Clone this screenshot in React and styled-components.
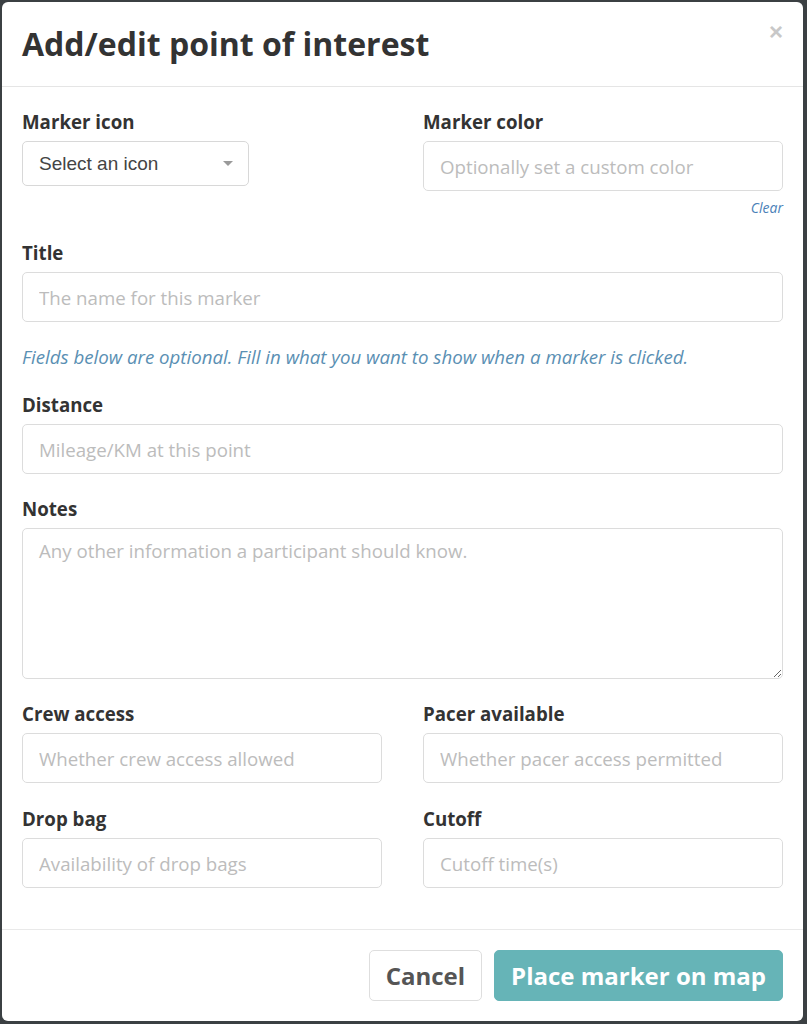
import React from "react";
import styled, { createGlobalStyle } from "styled-components";

const GlobalStyle = createGlobalStyle`
  * { box-sizing: border-box; }
  html, body {
    margin: 0;
    background: #3b4043;
    font-family: "Open Sans", "Liberation Sans", sans-serif;
  }
  #root { padding: 2px 4px 2px 2px; }
`;

const Modal = styled.div`
  width: 801px;
  background: #fff;
  border-radius: 6px;
  overflow: hidden;
`;

const Header = styled.div`
  display: flex;
  align-items: flex-start;
  justify-content: space-between;
  padding: 22px 20px 0 20px;
  height: 85px;
  border-bottom: 1px solid #e5e5e5;
`;

const Title = styled.h2`
  margin: 0;
  font-size: 32px;
  font-weight: 700;
  line-height: 40px;
  color: #333;
`;

const Close = styled.button`
  border: 0;
  background: none;
  padding: 0;
  margin-top: -2px;
  font-family: "Liberation Sans", sans-serif;
  font-size: 24px;
  font-weight: 700;
  line-height: 20px;
  color: #c8c8c8;
  cursor: pointer;
`;

const Body = styled.div`
  padding: 23px 20px 18px 20px;
`;

const Row = styled.div`
  display: grid;
  grid-template-columns: 1fr 1fr;
  column-gap: 41px;
`;

const Group = styled.div`
  margin-top: ${(p) => p.$top || "0"};
  margin-bottom: ${(p) => p.$bottom || "23px"};
`;

const Label = styled.label`
  display: block;
  font-size: 18.7px;
  font-weight: 700;
  line-height: 24px;
  color: #333;
  margin-bottom: 7px;
`;

const Input = styled.input`
  display: block;
  width: 100%;
  height: 50px;
  padding: 0 16px;
  border: 1px solid #dcdcdc;
  border-radius: 5px;
  font-family: "Open Sans", sans-serif;
  font-size: 18.7px;
  color: #333;
  outline: none;

  &::placeholder { color: #bcbcbc; }
`;

const TextArea = styled.textarea`
  display: block;
  width: 100%;
  height: 151px;
  padding: 10px 16px;
  border: 1px solid #dcdcdc;
  border-radius: 5px;
  font-family: "Open Sans", sans-serif;
  font-size: 18.7px;
  line-height: 24px;
  color: #333;
  outline: none;
  resize: vertical;

  &::placeholder { color: #bcbcbc; }
`;

const Select = styled.div`
  display: flex;
  align-items: center;
  justify-content: space-between;
  width: 227px;
  height: 45px;
  padding: 0 15px 0 16px;
  border: 1px solid #d8d8d8;
  border-radius: 5px;
  font-family: "Liberation Sans", Arial, sans-serif;
  font-size: 19px;
  color: #444;
`;

const Caret = styled.span`
  width: 0;
  height: 0;
  border-left: 5px solid transparent;
  border-right: 5px solid transparent;
  border-top: 5px solid #9a9a9a;
`;

const ClearRow = styled.div`
  display: flex;
  justify-content: flex-end;
  margin-top: 7px;
`;

const ClearLink = styled.a`
  font-size: 14px;
  font-style: italic;
  line-height: 19px;
  color: #4a7fb8;
  cursor: pointer;
`;

const Help = styled.p`
  margin: 0 0 24px 0;
  font-size: 18.7px;
  font-style: italic;
  line-height: 24px;
  color: #5a8fb3;
`;

const Footer = styled.div`
  display: flex;
  justify-content: flex-end;
  gap: 12px;
  padding: 20px;
  border-top: 1px solid #e9e9e9;
`;

const Button = styled.button`
  height: 51px;
  padding: 0 16px;
  border-radius: 5px;
  font-family: "Open Sans", sans-serif;
  font-size: 24px;
  font-weight: 700;
  cursor: pointer;
  border: 1px solid ${(p) => (p.$primary ? "#66b4b7" : "#dedede")};
  background: ${(p) => (p.$primary ? "#66b4b7" : "#fff")};
  color: ${(p) => (p.$primary ? "#fff" : "#555")};
`;

export default function App() {
  return (
    <>
      <GlobalStyle />
      <Modal>
        <Header>
          <Title>Add/edit point of interest</Title>
          <Close aria-label="Close">×</Close>
        </Header>
        <Body>
          <Row>
            <Group $bottom="0">
              <Label>Marker icon</Label>
              <Select>
                <span>Select an icon</span>
                <Caret />
              </Select>
            </Group>
            <Group $bottom="0">
              <Label>Marker color</Label>
              <Input placeholder="Optionally set a custom color" />
              <ClearRow>
                <ClearLink>Clear</ClearLink>
              </ClearRow>
            </Group>
          </Row>
          <Group $top="24px">
            <Label>Title</Label>
            <Input placeholder="The name for this marker" />
          </Group>
          <Help>Fields below are optional. Fill in what you want to show when a marker is clicked.</Help>
          <Group>
            <Label>Distance</Label>
            <Input placeholder="Mileage/KM at this point" />
          </Group>
          <Group>
            <Label>Notes</Label>
            <TextArea placeholder="Any other information a participant should know." />
          </Group>
          <Row>
            <Group $bottom="24px">
              <Label>Crew access</Label>
              <Input placeholder="Whether crew access allowed" />
            </Group>
            <Group $bottom="24px">
              <Label>Pacer available</Label>
              <Input placeholder="Whether pacer access permitted" />
            </Group>
          </Row>
          <Row>
            <Group>
              <Label>Drop bag</Label>
              <Input placeholder="Availability of drop bags" />
            </Group>
            <Group>
              <Label>Cutoff</Label>
              <Input placeholder="Cutoff time(s)" />
            </Group>
          </Row>
        </Body>
        <Footer>
          <Button>Cancel</Button>
          <Button $primary>Place marker on map</Button>
        </Footer>
      </Modal>
    </>
  );
}
